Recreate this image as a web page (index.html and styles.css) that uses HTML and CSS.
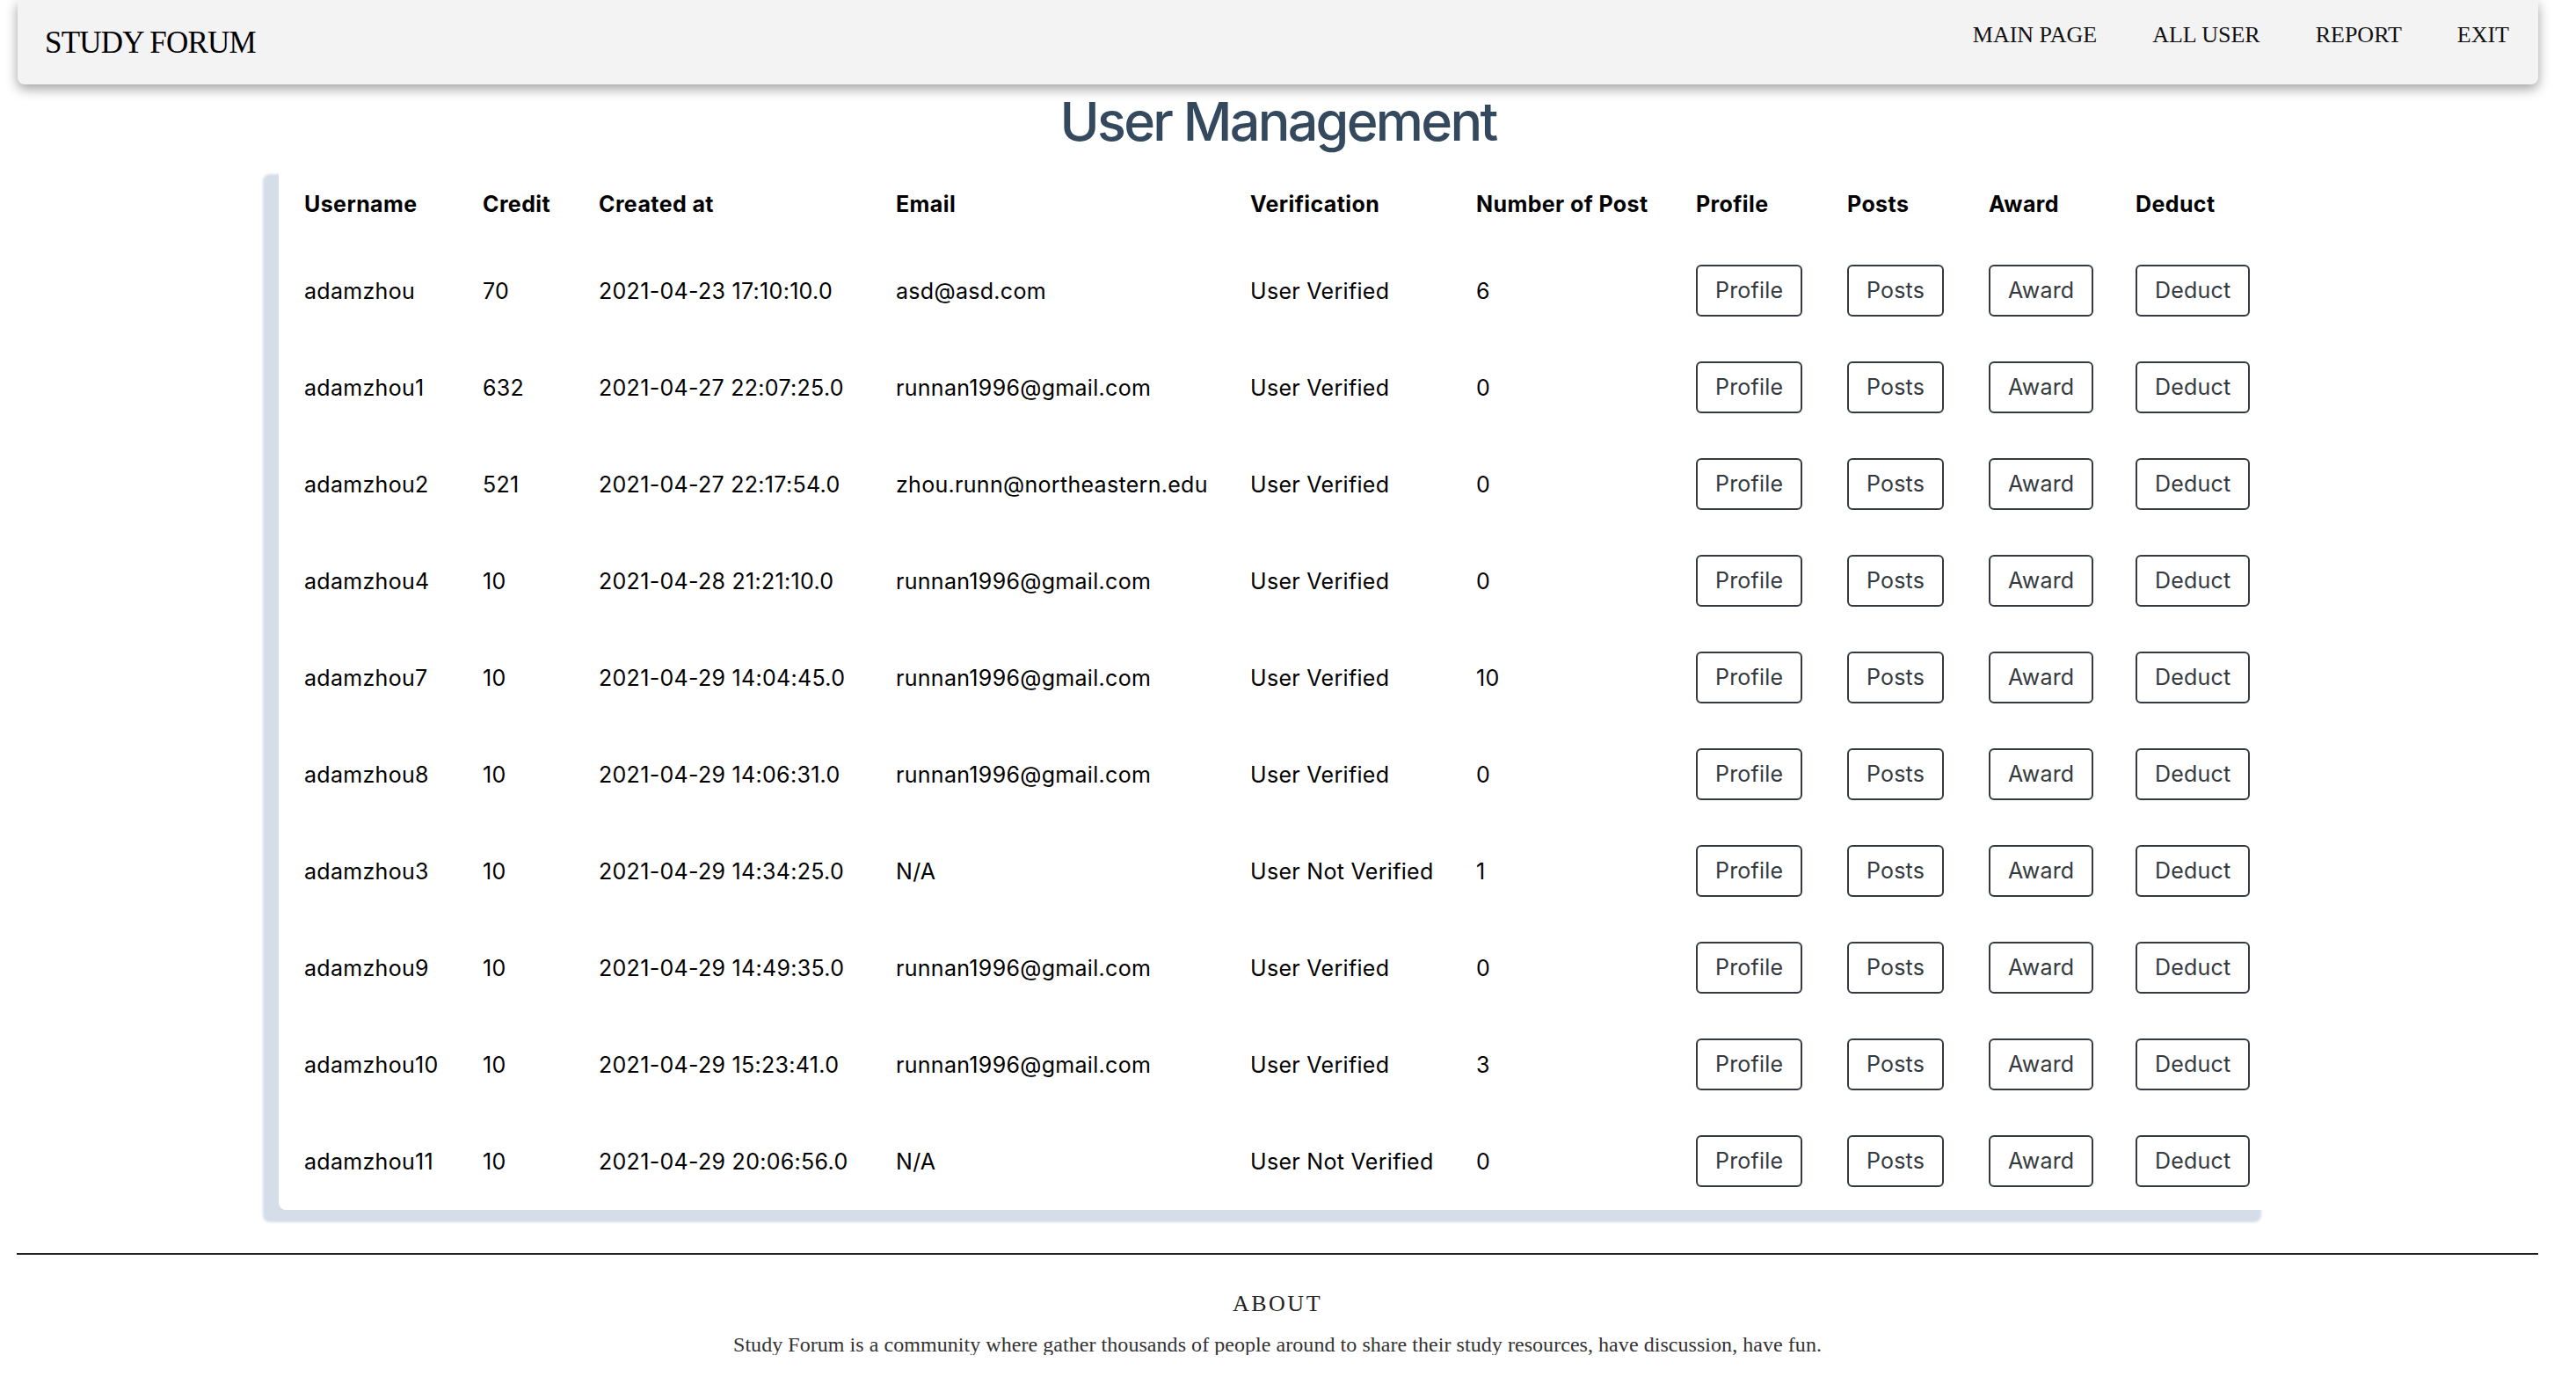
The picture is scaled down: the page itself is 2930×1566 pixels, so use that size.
FILE: index.html
```html
<!DOCTYPE html>
<html lang="en">
<head>
<meta charset="utf-8">
<title>Study Forum - User Management</title>
<link rel="stylesheet" href="styles.css">
</head>
<body>
<nav class="navbar">
  <div class="brand">STUDY FORUM</div>
  <div class="links">
    <a class="link" href="#">MAIN PAGE</a>
    <a class="link" href="#">ALL USER</a>
    <a class="link" href="#">REPORT</a>
    <a class="link" href="#">EXIT</a>
  </div>
</nav>
<h1 class="title">User Management</h1>
<div class="card">
  <table class="users">
    <colgroup>
      <col class="c-user"><col class="c-credit"><col class="c-created"><col class="c-email"><col class="c-verif"><col class="c-num"><col class="c-profile"><col class="c-posts"><col class="c-award"><col class="c-deduct">
    </colgroup>
    <thead>
      <tr class="head"><th>Username</th><th>Credit</th><th>Created at</th><th>Email</th><th>Verification</th><th>Number of Post</th><th>Profile</th><th>Posts</th><th>Award</th><th>Deduct</th></tr>
    </thead>
    <tbody>
      <tr><td>adamzhou</td><td>70</td><td>2021-04-23 17:10:10.0</td><td>asd@asd.com</td><td>User Verified</td><td>6</td><td><button class="btn">Profile</button></td><td><button class="btn">Posts</button></td><td><button class="btn">Award</button></td><td><button class="btn">Deduct</button></td></tr>
      <tr><td>adamzhou1</td><td>632</td><td>2021-04-27 22:07:25.0</td><td>runnan1996@gmail.com</td><td>User Verified</td><td>0</td><td><button class="btn">Profile</button></td><td><button class="btn">Posts</button></td><td><button class="btn">Award</button></td><td><button class="btn">Deduct</button></td></tr>
      <tr><td>adamzhou2</td><td>521</td><td>2021-04-27 22:17:54.0</td><td>zhou.runn@northeastern.edu</td><td>User Verified</td><td>0</td><td><button class="btn">Profile</button></td><td><button class="btn">Posts</button></td><td><button class="btn">Award</button></td><td><button class="btn">Deduct</button></td></tr>
      <tr><td>adamzhou4</td><td>10</td><td>2021-04-28 21:21:10.0</td><td>runnan1996@gmail.com</td><td>User Verified</td><td>0</td><td><button class="btn">Profile</button></td><td><button class="btn">Posts</button></td><td><button class="btn">Award</button></td><td><button class="btn">Deduct</button></td></tr>
      <tr><td>adamzhou7</td><td>10</td><td>2021-04-29 14:04:45.0</td><td>runnan1996@gmail.com</td><td>User Verified</td><td>10</td><td><button class="btn">Profile</button></td><td><button class="btn">Posts</button></td><td><button class="btn">Award</button></td><td><button class="btn">Deduct</button></td></tr>
      <tr><td>adamzhou8</td><td>10</td><td>2021-04-29 14:06:31.0</td><td>runnan1996@gmail.com</td><td>User Verified</td><td>0</td><td><button class="btn">Profile</button></td><td><button class="btn">Posts</button></td><td><button class="btn">Award</button></td><td><button class="btn">Deduct</button></td></tr>
      <tr><td>adamzhou3</td><td>10</td><td>2021-04-29 14:34:25.0</td><td>N/A</td><td>User Not Verified</td><td>1</td><td><button class="btn">Profile</button></td><td><button class="btn">Posts</button></td><td><button class="btn">Award</button></td><td><button class="btn">Deduct</button></td></tr>
      <tr><td>adamzhou9</td><td>10</td><td>2021-04-29 14:49:35.0</td><td>runnan1996@gmail.com</td><td>User Verified</td><td>0</td><td><button class="btn">Profile</button></td><td><button class="btn">Posts</button></td><td><button class="btn">Award</button></td><td><button class="btn">Deduct</button></td></tr>
      <tr><td>adamzhou10</td><td>10</td><td>2021-04-29 15:23:41.0</td><td>runnan1996@gmail.com</td><td>User Verified</td><td>3</td><td><button class="btn">Profile</button></td><td><button class="btn">Posts</button></td><td><button class="btn">Award</button></td><td><button class="btn">Deduct</button></td></tr>
      <tr><td>adamzhou11</td><td>10</td><td>2021-04-29 20:06:56.0</td><td>N/A</td><td>User Not Verified</td><td>0</td><td><button class="btn">Profile</button></td><td><button class="btn">Posts</button></td><td><button class="btn">Award</button></td><td><button class="btn">Deduct</button></td></tr>
    </tbody>
  </table>
</div>
<footer class="footer">
  <div class="about">ABOUT</div>
  <p class="about-text">Study Forum is a community where gather thousands of people around to share their study resources, have discussion, have fun.</p>
</footer>
</body>
</html>
```

FILE: styles.css
```css
html, body {
  background: #ffffff;
}
body {
  margin: 0;
  padding: 0 43px 0 20px;
  font-family: Inter, "Noto Sans", sans-serif;
  color: #000;
  overflow: hidden;
}
.navbar {
  height: 96px;
  background: #f3f3f3;
  border-radius: 0 0 8px 8px;
  box-shadow: 0 5px 14px rgba(0, 0, 0, 0.38);
  display: flex;
  justify-content: space-between;
  align-items: flex-start;
  position: relative;
  z-index: 2;
}
.brand {
  font-family: "Liberation Serif", serif;
  font-size: 35px;
  line-height: 36px;
  letter-spacing: -0.8px;
  color: #000;
  padding: 31px 0 0 31px;
}
.links {
  display: flex;
  gap: 63px;
  padding: 27px 33px 0 0;
}
.link {
  font-family: "Liberation Serif", serif;
  font-size: 26px;
  line-height: 26px;
  color: #111;
  text-decoration: none;
}
.title {
  margin: 4px 0 8px;
  text-align: center;
  font-family: Inter, sans-serif;
  font-weight: 500;
  font-size: 61px;
  line-height: 76px;
  letter-spacing: -2.7px;
  color: #34495e;
}
.card {
  width: 2273px;
  margin: 0 auto;
  padding: 4px 32px 0 29px;
  box-sizing: border-box;
  background: #fff;
  border-radius: 8px;
  box-shadow: -18px 14px 3px 0 #d5dde9;
}
.users {
  width: 2212px;
  table-layout: fixed;
  border-collapse: collapse;
  font-size: 25px;
  line-height: 36px;
  letter-spacing: 0.3px;
}
.c-user { width: 203px; }
.c-credit { width: 132px; }
.c-created { width: 338px; }
.c-email { width: 403px; }
.c-verif { width: 257px; }
.c-num { width: 250px; }
.c-profile { width: 172px; }
.c-posts { width: 161px; }
.c-award { width: 167px; }
.c-deduct { width: 129px; }
.users th, .users td {
  padding: 0;
  text-align: left;
  vertical-align: middle;
  white-space: nowrap;
}
.users th {
  font-weight: 700;
  letter-spacing: 0.4px;
}
.users tr.head {
  height: 88px;
}
.users tbody tr {
  height: 110px;
}
.btn {
  font-family: Inter, sans-serif;
  font-size: 25px;
  line-height: 55px;
  height: 59px;
  padding: 0 20px;
  color: #343a40;
  background: #fff;
  border: 2px solid #343a40;
  border-radius: 6px;
  margin-top: -2px;
  letter-spacing: 0.2px;
}
.footer {
  margin-top: 49px;
  border-top: 2px solid #222;
  margin-left: -1px;
  text-align: center;
  padding-top: 43px;
}
.about {
  font-family: "Liberation Serif", serif;
  font-size: 26px;
  line-height: 26px;
  letter-spacing: 2.5px;
  color: #222;
}
.about-text {
  margin: 21px 0 0;
  font-family: "Liberation Serif", serif;
  font-size: 24px;
  line-height: 24px;
  letter-spacing: 0.05px;
  color: #333;
}
```
